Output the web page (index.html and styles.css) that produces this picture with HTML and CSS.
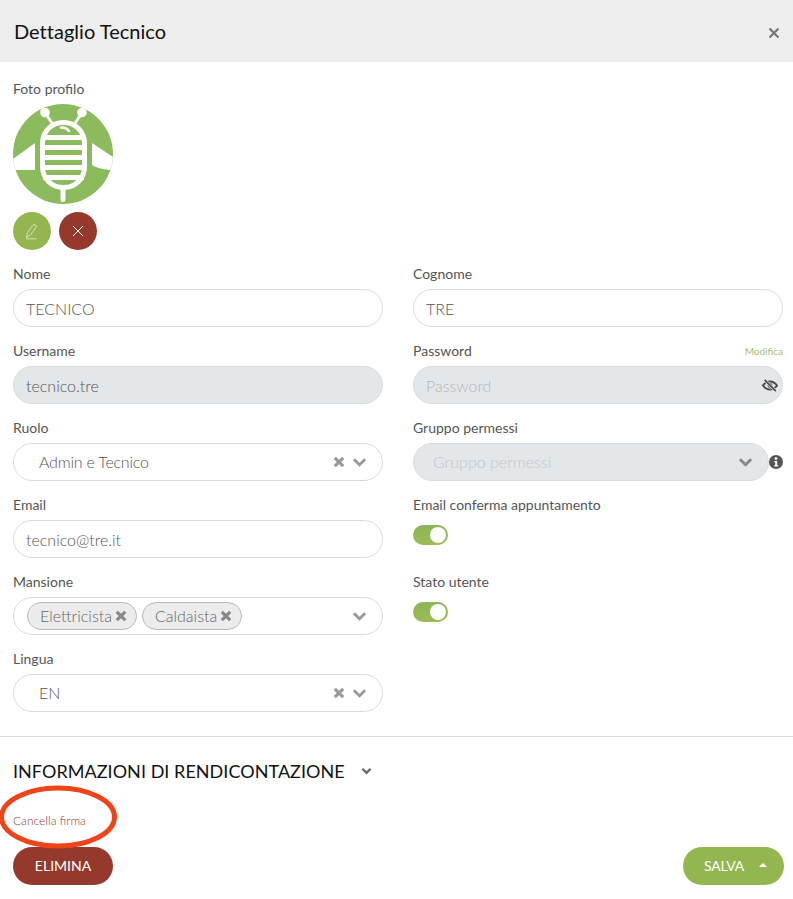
FILE: index.html
```html
<!DOCTYPE html>
<html lang="it">
<head>
<meta charset="utf-8">
<title>Dettaglio Tecnico</title>
<link rel="stylesheet" href="styles.css">
</head>
<body>
<div class="modal">
  <header class="head">
    <h1 class="title">Dettaglio Tecnico</h1>
    <svg class="close" viewBox="0 0 12 12" width="12" height="12"><path d="M1.500 1.500l9 9M10.500 1.500l-9 9"/></svg>
  </header>
  <main class="body">
    <div class="label">Foto profilo</div>
    <svg class="avatar" viewBox="0 0 100 100" width="100" height="100">
      <defs><clipPath id="disc"><circle cx="50" cy="50" r="50"/></clipPath></defs>
      <circle cx="50" cy="50" r="50" fill="#8cbb5e"/>
      <g clip-path="url(#disc)" fill="#fff">
        <path d="M22 39L0 55V66H22Z"/>
        <path d="M79 39L100 53V66H97Q85 65 79 61Z"/>
        <circle cx="32" cy="8.500" r="4.800"/>
        <circle cx="69" cy="8.500" r="4.800"/>
        <path d="M32 9L39 19M69 9L62 19" stroke="#fff" stroke-width="3"/>
        <rect x="47.500" y="80" width="5" height="18" rx="2.500"/>
        <rect x="27" y="16" width="47" height="70" rx="23"/>
        <rect x="32" y="21" width="37" height="60" rx="18" fill="#8cbb5e"/>
        <rect x="30" y="31" width="41" height="5"/>
        <rect x="30" y="41" width="41" height="5"/>
        <rect x="30" y="51" width="41" height="5"/>
        <rect x="30" y="61" width="41" height="5"/>
        <rect x="30" y="71" width="41" height="5"/>
        <path d="M48 23.500Q53 23 56 27" fill="none" stroke="#fff" stroke-width="2.600" stroke-linecap="round"/>
      </g>
    </svg>
    <div class="photo-actions">
      <button class="round round-green" type="button" aria-label="Modifica">
        <svg viewBox="0 0 16 18" width="16" height="18"><path d="M2.500 15.500L3.500 10.500L9.800 2.200L12.800 4.200L6.500 13L2.500 15.500ZM2 16.800H12.500"/></svg>
      </button>
      <button class="round round-red" type="button" aria-label="Rimuovi">
        <svg viewBox="0 0 14 14" width="14" height="14"><path d="M2 2l10 10M12 2L2 12"/></svg>
      </button>
    </div>

    <div class="form">
      <div class="field"><div class="label">Nome</div><div class="input">TECNICO</div></div>
      <div class="field"><div class="label">Cognome</div><div class="input">TRE</div></div>

      <div class="field"><div class="label">Username</div><div class="input is-disabled">tecnico.tre</div></div>
      <div class="field">
        <div class="label label-split"><span>Password</span><span class="edit-link">Modifica</span></div>
        <div class="input is-disabled is-placeholder">Password
          <svg class="eye" viewBox="0 0 18 14" width="16" height="13"><path d="M1 7Q4.500 2.400 9 2.400T17 7Q13.500 11.600 9 11.600T1 7Z" fill="none" stroke="#4a4a4a" stroke-width="2.200"/><circle cx="9" cy="7" r="2.800" fill="#4a4a4a"/><path d="M3 .8L15.500 13.200" stroke="#e4e7ea" stroke-width="3.600"/><path d="M3 .8L15.500 13.200" stroke="#4a4a4a" stroke-width="2"/></svg>
        </div>
      </div>

      <div class="field">
        <div class="label">Ruolo</div>
        <div class="input select"><span class="value value-tight">Admin e Tecnico</span>
          <svg class="x-icon" viewBox="0 0 10 10" width="12" height="12"><path d="M1.500 1.500l7 7M8.500 1.500l-7 7"/></svg>
          <svg class="chev" viewBox="0 0 16 10" width="15" height="10"><path d="M2 2l6 6 6-6"/></svg>
        </div>
      </div>
      <div class="field">
        <div class="label">Gruppo permessi</div>
        <div class="with-info">
          <div class="input select is-disabled is-placeholder-soft"><span class="value">Gruppo permessi</span>
            <svg class="chev" viewBox="0 0 16 10" width="15" height="10"><path d="M2 2l6 6 6-6"/></svg>
          </div>
          <svg class="info" viewBox="0 0 14 14" width="14" height="14"><circle cx="7" cy="7" r="7" fill="#555"/><circle cx="7" cy="3.600" r="1.400" fill="#fff"/><path d="M5.300 6h2.900v4.300h1v1.200H5.200v-1.200h1V7.200H5.300z" fill="#fff"/></svg>
        </div>
      </div>

      <div class="field"><div class="label">Email</div><div class="input">tecnico@tre.it</div></div>
      <div class="field"><div class="label">Email conferma appuntamento</div><div class="toggle-row"><span class="toggle"><span class="knob"></span></span></div></div>

      <div class="field">
        <div class="label">Mansione</div>
        <div class="input select multi">
          <span class="chip">Elettricista<svg class="x-icon" viewBox="0 0 10 10" width="12" height="12"><path d="M1.500 1.500l7 7M8.500 1.500l-7 7"/></svg></span>
          <span class="chip">Caldaista<svg class="x-icon" viewBox="0 0 10 10" width="12" height="12"><path d="M1.500 1.500l7 7M8.500 1.500l-7 7"/></svg></span>
          <svg class="chev chev-end" viewBox="0 0 16 10" width="15" height="10"><path d="M2 2l6 6 6-6"/></svg>
        </div>
      </div>
      <div class="field"><div class="label">Stato utente</div><div class="toggle-row"><span class="toggle"><span class="knob"></span></span></div></div>

      <div class="field">
        <div class="label">Lingua</div>
        <div class="input select"><span class="value">EN</span>
          <svg class="x-icon" viewBox="0 0 10 10" width="12" height="12"><path d="M1.500 1.500l7 7M8.500 1.500l-7 7"/></svg>
          <svg class="chev" viewBox="0 0 16 10" width="15" height="10"><path d="M2 2l6 6 6-6"/></svg>
        </div>
      </div>
    </div>
  </main>

  <hr class="rule">

  <section class="report">
    <div class="report-head">
      <h2 class="report-title">INFORMAZIONI DI RENDICONTAZIONE</h2>
      <svg class="report-chev" viewBox="0 0 12 8" width="11" height="8"><path d="M1.500 1.500L6 6l4.500-4.500"/></svg>
    </div>
    <a class="clear-sign">Cancella firma</a>
    <svg class="mark" viewBox="0 0 120 66" width="120" height="66"><ellipse cx="58" cy="33" rx="56.500" ry="29"/></svg>
    <div class="footer">
      <button class="btn btn-red" type="button">ELIMINA</button>
      <button class="btn btn-green" type="button">SALVA<span class="caret"></span></button>
    </div>
  </section>
</div>
</body>
</html>
```

FILE: styles.css
```css
* { box-sizing: border-box; }
html, body { margin: 0; padding: 0; background: #fff; }
body { font-family: Lato, "Open Sans", sans-serif; color: #555; overflow: hidden; }
.modal { width: 793px; height: 899px; }

.head { height: 62px; background: #eee; display: flex; align-items: center; justify-content: space-between; padding: 0 13px 0 14px; }
.title { margin: 0; font-size: 20px; font-weight: 400; color: #111; letter-spacing: .02px; }
.close { fill: none; stroke: #777; stroke-width: 2.2; margin-top: 4px; }

.body { padding: 18px 10px 0 13px; }
.label { height: 18px; line-height: 18px; font-size: 14px; color: #555; margin-bottom: 6px; }
.label-split { display: flex; justify-content: space-between; }
.edit-link { font-size: 10px; color: #a5c46c; }

.avatar { display: block; }
.photo-actions { display: flex; gap: 8px; margin: 8px 0 15px; }
.round { width: 38px; height: 38px; padding: 0; border: 0; border-radius: 50%; display: flex; align-items: center; justify-content: center; }
.round svg { fill: none; stroke: #fff; stroke-width: 1; }
.round-green { background: #94b650; }
.round-green svg { stroke: #d6e4b6; }
.round-red { background: #96392d; }

.form { display: grid; grid-template-columns: 370px 370px; column-gap: 30px; row-gap: 15px; }
.field { min-width: 0; }
.input { height: 38px; border: 1px solid #d9dcdf; border-radius: 19px; padding: 2px 12px 0; font-size: 16px; font-weight: 300; line-height: 34px; color: #555; display: flex; align-items: center; background: #fff; }
.is-disabled { background: #e4e7ea; }
.is-placeholder { color: #b4b6b9; justify-content: space-between; padding-right: 4px; }
.eye { flex: none; margin-top: -2px; }
.select { padding: 0 15px 0 25px; }
.is-placeholder-soft { padding-left: 19px; }
.is-placeholder-soft .value { color: #c3c6c9; }
.is-placeholder-soft .chev { stroke: #888; }
.select .value { flex: 1; }
.value-tight { letter-spacing: -.2px; }
.x-icon { fill: none; stroke: #999; stroke-width: 2.6; margin-right: 7px; }
.chev { fill: none; stroke: #999; stroke-width: 3; }
.chev-end { margin-left: auto; }
.multi { padding: 0 15px 0 13px; gap: 5px; }
.chip { height: 28px; border: 1px solid #bbb; border-radius: 14px; background: #ececec; padding: 0 9px 0 12px; display: inline-flex; align-items: center; gap: 3px; color: #666; font-weight: 300; }
.select .chip .x-icon { margin: 0; stroke: #888; }
.with-info { display: flex; align-items: center; }
.with-info .input { flex: 1; }
.info { flex: none; }
.toggle-row { height: 38px; padding-top: 5px; }
.toggle { display: block; width: 35px; height: 20px; border-radius: 10px; background: linear-gradient(#8bb658, #9cbc55); padding: 2px 2px 2px 17px; }
.knob { display: block; width: 16px; height: 16px; border-radius: 50%; background: #fff; }

.rule { margin: 24px 0 0; border: 0; border-top: 1px solid #ddd; }

.report { position: relative; padding: 0 9px 0 13px; }
.report-head { display: flex; align-items: center; gap: 16px; height: 24px; margin-top: 22px; }
.report-title { margin: 0; font-size: 18px; font-weight: 400; color: #111; letter-spacing: .04px; }
.report-chev { fill: none; stroke: #666; stroke-width: 2.4; }
.clear-sign { display: block; margin-top: 31px; height: 14px; line-height: 14px; font-size: 12px; font-weight: 300; color: #96392d; }
.mark { position: absolute; left: 0; top: 25px; fill: none; stroke: #ef4318; stroke-width: 5; }
.footer { display: flex; justify-content: space-between; margin-top: 19px; }
.btn { height: 38px; border: 0; border-radius: 19px; color: #fff; font-family: inherit; font-size: 14px; font-weight: 400; padding: 0 0 2px; display: flex; align-items: center; justify-content: center; }
.btn-red { width: 100px; background: #96392d; }
.btn-green { width: 101px; background: #94b650; padding-left: 4px; letter-spacing: -.2px; }
.caret { width: 0; height: 0; margin-left: 15px; border-left: 4px solid transparent; border-right: 4px solid transparent; border-bottom: 4px solid #fff; }
```
